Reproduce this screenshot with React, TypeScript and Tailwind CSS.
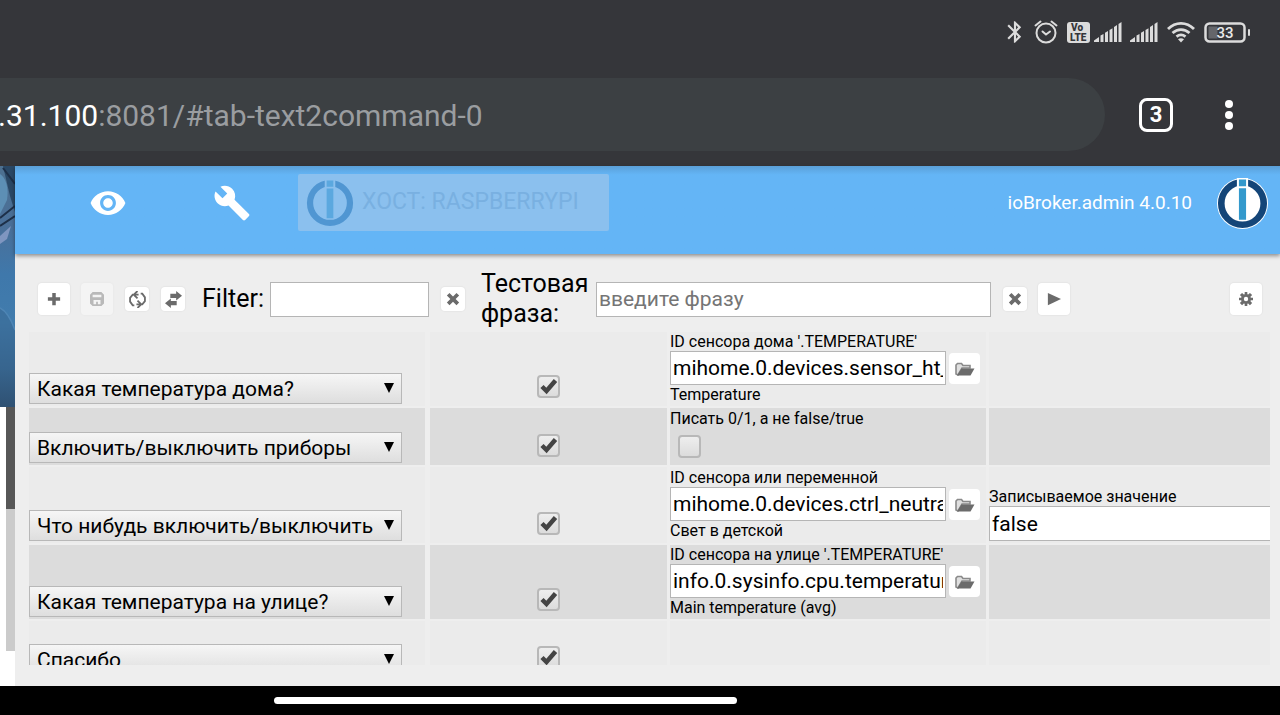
import type { ReactNode } from "react";
import { MdBluetooth, MdBuild, MdVisibility } from "react-icons/md";

type Rule = {
  command: string;
  label?: string;
  value?: string;
  hint?: string;
  flag?: string;
  param?: string;
};

const rules: Rule[] = [
  {
    command: "Какая температура дома?",
    label: "ID сенсора дома '.TEMPERATURE'",
    value: "mihome.0.devices.sensor_ht_temperature",
    hint: "Temperature",
  },
  {
    command: "Включить/выключить приборы",
    flag: "Писать 0/1, а не false/true",
  },
  {
    command: "Что нибудь включить/выключить",
    label: "ID сенсора или переменной",
    value: "mihome.0.devices.ctrl_neutral",
    hint: "Свет в детской",
    param: "false",
  },
  {
    command: "Какая температура на улице?",
    label: "ID сенсора на улице '.TEMPERATURE'",
    value: "info.0.sysinfo.cpu.temperature",
    hint: "Main temperature (avg)",
  },
  { command: "Спасибо" },
];

function Signal() {
  return (
    <svg width="28" height="20" viewBox="0 0 28 20" fill="#dcdcdc" aria-hidden="true">
      <path d="M0 20v-1.500L5 15v5zM6.500 13.500l3-1.600V20h-3zM11 10.800l3-1.700V20h-3zM15.500 8l3-1.800V20h-3zM20 5l3-1.900V20h-3zM24.500 2l3-2v20h-3z" />
    </svg>
  );
}

function StatusBar() {
  return (
    <div className="flex h-16 items-center justify-end pr-[29px]">
      <MdBluetooth className="mr-px size-[26px] text-[#dcdcdc]" />
      <svg className="ml-1" width="26" height="24" viewBox="0 0 26 24" fill="none" stroke="#dcdcdc" strokeWidth="2" strokeLinecap="round" aria-hidden="true">
        <circle cx="13" cy="13" r="9.500" />
        <path d="M9.500 11.500l3.500 3 4-3M2.500 5.500l5-4M23.500 5.500l-5-4" />
      </svg>
      <svg className="ml-2" width="23" height="21" viewBox="0 0 23 21" aria-hidden="true">
        <rect width="23" height="21" rx="3" fill="#dcdcdc" />
        <text x="4" y="9" fontSize="10" fontWeight="900" fontFamily="Roboto, sans-serif" fill="#35363a">Vo</text>
        <text x="3" y="19" fontSize="10" fontWeight="900" fontFamily="Roboto, sans-serif" fill="#35363a">LTE</text>
      </svg>
      <div className="ml-1 flex gap-2">
        <Signal />
        <Signal />
      </div>
      <svg className="ml-2" width="30" height="22" viewBox="0 0 30 22" fill="none" stroke="#dcdcdc" strokeWidth="2.800" aria-hidden="true">
        <path d="M2 8C9.500.5 20.500.5 28 8M6.500 12c5-4.600 12-4.600 17 0M10.500 15.700c2.800-2.300 6.200-2.300 9 0" />
        <path d="M15 21.500l-3-3.200c1.800-1.300 4.200-1.300 6 0z" fill="#dcdcdc" stroke="none" />
      </svg>
      <svg className="ml-2" width="47" height="21" viewBox="0 0 47 21" aria-hidden="true">
        <rect x="1.500" y="1.500" width="39" height="18" rx="4" fill="none" stroke="#dcdcdc" strokeWidth="2.500" />
        <rect x="4.500" y="4.500" width="9" height="12" fill="#65666a" />
        <rect x="44" y="7" width="2" height="7" rx="1" fill="#dcdcdc" />
        <text x="21" y="16" textAnchor="middle" fontSize="15" fontWeight="500" fontFamily="Roboto, sans-serif" fill="#e8e8e8">33</text>
      </svg>
    </div>
  );
}

function AddressBar() {
  return (
    <div className="mt-[14px] mb-[15px] flex items-center">
      <a
        href="#tab-text2command-0"
        className="flex h-[73px] flex-1 items-center overflow-hidden rounded-r-full bg-[#3c4043] pt-[2px] text-[30px] text-[#9a9da0]"
      >
        <span className="-ml-[2px] text-white">.31.100</span>:8081/#tab-text2command-0
      </a>
      <button aria-label="Tabs" className="ml-[34px] flex size-[34px] items-center justify-center rounded-lg border-[3px] border-white text-[22px] font-bold text-white">
        3
      </button>
      <button aria-label="Menu" className="mr-[41px] ml-[46px] flex w-5 flex-col items-center gap-[3px]">
        <span className="size-2 rounded-full bg-white" />
        <span className="size-2 rounded-full bg-white" />
        <span className="size-2 rounded-full bg-white" />
      </button>
    </div>
  );
}

function Logo({ muted, className }: { muted?: boolean; className: string }) {
  const ring = muted ? "#5096d2" : "#144578";
  const bar = muted ? "#5ba8df" : "#3399cc";
  const back = muted ? "#8bc0ee" : "#fff";
  return (
    <svg className={className} viewBox="0 0 50 50" aria-hidden="true">
      <circle cx="25" cy="25" r="25" fill={back} />
      <circle cx="25" cy="25" r="20.800" fill="none" stroke={ring} strokeWidth="6.500" />
      <path fill={back} d="M19.500 0h11v12h-11z" />
      <path fill={bar} d="M21.500 1.500h7v6.500h-7zM21.500 10h7v31h-7z" />
    </svg>
  );
}

function SideStrip() {
  return (
    <aside className="flex w-[15px] shrink-0 flex-col bg-white">
      <svg className="w-full" height="241" viewBox="0 0 15 241" preserveAspectRatio="none" aria-hidden="true">
        <defs>
          <linearGradient id="wave" x1="0" y1="0" x2="0" y2="1">
            <stop offset="0" stopColor="#4d7090" />
            <stop offset="0.25" stopColor="#4a6f98" />
            <stop offset="0.45" stopColor="#3f78ab" />
            <stop offset="0.65" stopColor="#417cad" />
            <stop offset="1" stopColor="#2f5173" />
          </linearGradient>
        </defs>
        <path fill="url(#wave)" d="M0 0h15v241H0z" />
        <path fill="#2a4866" d="M3 0h12v46L10 30z" />
        <path fill="#5d8fb5" d="M0 8c6 4 9 14 7 26l-7 14z" />
        <path fill="none" stroke="#1d2f48" strokeWidth="2" d="M0 52l15-12M3 2l12 16M0 60l15-10" />
        <path fill="#7f96c0" d="M0 70l11-10-4 13-7 5z" />
        <path fill="#386690" d="M0 142c6 3 11 11 15 22v40H0z" opacity="0.5" />
        <path fill="none" stroke="#4f86b5" strokeWidth="1.500" d="M0 142c6 3 11 11 15 22" />
      </svg>
      <div className="ml-[6px] h-[102px] bg-[#575757]" />
      <div className="ml-[6px] h-[142px] bg-[#cbcbcb]" />
    </aside>
  );
}

function Header() {
  return (
    <header className="relative flex h-[88px] items-start bg-[#64b5f6] bg-linear-to-b from-[#5a9fd8] to-[#64b5f6] to-10% pt-2 pr-[12px] pl-[74px] shadow-[0_2px_4px_rgba(0,0,0,0.4)]">
      <button aria-label="Visibility" className="mt-[10px]">
        <MdVisibility className="size-[38px] text-white" />
      </button>
      <button aria-label="Settings" className="mt-[10px] ml-[86px]">
        <MdBuild className="size-[38px] text-white" />
      </button>
      <button disabled className="ml-[47px] flex h-[57px] w-[311px] items-center gap-2 rounded-xs bg-[#8bc0ee] pl-2 text-[23px] text-[#79b0e1]">
        <Logo muted className="size-[48px]" />
        ХОСТ: RASPBERRYPI
      </button>
      <a href="#about" className="mt-[4px] ml-auto flex items-center gap-[25px] text-[19px] text-white">
        ioBroker.admin 4.0.10
        <Logo className="size-[51px]" />
      </a>
    </header>
  );
}

const glyphs: Record<string, ReactNode> = {
  plus: <path d="M6 1h4v5h5v4h-5v5H6v-5H1V6h5z" />,
  disk: <path fillRule="evenodd" d="M3 0h10l3 3v10l-3 3H3l-3-3V3zM3 3v3h10V3zM4 9v5h3v-3h2v3h3V9z" />,
  refresh: (
    <path
      d="M5 13.500H3.500L1 10V6.500L3.500 3.500H9M8 0L4.500 3.500 8 7M11 2.500h1.500L15 6v3.500l-2.500 3H7M8 9l3.500 3.500L8 16"
      fill="none"
      stroke="currentColor"
      strokeWidth="1.700"
    />
  ),
  swap: <path d="M10.500 0L16 4.500 10.500 9V6.500H5v-4h5.500zM5.500 7L0 11.500 5.500 16v-2.500H11v-4H5.500z" />,
  close: <path d="M1 4l3-3 4 4 4-4 3 3-4 4 4 4-3 3-4-4-4 4-3-3 4-4z" />,
  play: <path d="M1 1l15 7-15 7z" />,
  gear: (
    <path
      fillRule="evenodd"
      d="M6.500 0h3v2.500l1 .4 2-1.900 2.500 2.500-1.900 2 .4 1H16v3h-2.500l-.4 1 1.900 2-2.500 2.500-2-1.900-1 .4V16h-3v-2.500l-1-.4-2 1.900L1 12.500l1.900-2-.4-1H0v-3h2.500l.4-1-1.900-2L3.500 1l2 1.900 1-.4zM8 5.500a2.500 2.500 0 1 0 0 5 2.500 2.500 0 0 0 0-5z"
    />
  ),
};

function ToolButton({
  icon,
  label,
  small,
  large,
  disabled,
  className = "",
}: {
  icon: string;
  label: string;
  small?: boolean;
  large?: boolean;
  disabled?: boolean;
  className?: string;
}) {
  return (
    <button
      aria-label={label}
      disabled={disabled}
      className={`flex shrink-0 items-center justify-center rounded-sm bg-white text-[#6b6b6b] shadow-[0_0_1px_1px_#e6e6e6] disabled:opacity-40 ${
        small ? "size-6" : "size-8"
      } ${className}`}
    >
      <svg className={large ? "size-[17px]" : "size-[14px]"} viewBox="0 0 16 16" fill="currentColor" aria-hidden="true">
        {glyphs[icon]}
      </svg>
    </button>
  );
}

function Toolbar() {
  return (
    <div className="flex h-[76px] items-center pt-[14px] pr-[18px] pl-[23px] text-[25px] leading-[30px]">
      <ToolButton icon="plus" label="Add" />
      <ToolButton icon="disk" label="Save" disabled className="ml-[11px]" />
      <ToolButton icon="refresh" label="Refresh" small large className="ml-3" />
      <ToolButton icon="swap" label="Transfer" small large className="ml-3" />
      <label htmlFor="filter" className="ml-[17px]">
        Filter:
      </label>
      <input id="filter" className="ml-[6px] h-[35px] w-[159px] border border-[#b5b5b5] bg-white px-1 text-[21px]" />
      <ToolButton icon="close" label="Clear filter" small className="ml-3" />
      <label htmlFor="phrase" className="ml-4 w-[110px] shrink-0">
        Тестовая фраза:
      </label>
      <input
        id="phrase"
        placeholder="введите фразу"
        className="ml-[5px] h-[35px] w-[395px] min-w-0 border border-[#b5b5b5] bg-white px-[2px] text-[21px] placeholder:text-[#757575]"
      />
      <ToolButton icon="close" label="Clear phrase" small className="ml-3" />
      <ToolButton icon="play" label="Play" className="ml-[11px]" />
      <ToolButton icon="gear" label="Options" className="ml-auto" />
    </div>
  );
}

function Check({ checked, label, id }: { checked?: boolean; label?: string; id?: string }) {
  return (
    <span className="relative inline-block size-[23px] align-top">
      <input
        id={id}
        type="checkbox"
        defaultChecked={checked}
        aria-label={label}
        className="peer block size-[23px] appearance-none rounded-sm border-2 border-[#b8b8b8] bg-linear-to-b from-[#eee] to-[#dcdcdc]"
      />
      <svg className="pointer-events-none absolute inset-0 hidden peer-checked:block" viewBox="0 0 23 23" aria-hidden="true">
        <path d="M5 11.500L9.500 16 18.500 5.500" fill="none" stroke="#444" strokeWidth="4.500" />
      </svg>
    </span>
  );
}

function RuleRow({ rule, index }: { rule: Rule; index: number }) {
  const id = `rule-${index}`;
  return (
    <tr className={`odd:bg-[#ebebeb] even:bg-[#dcdcdc] ${rule.param ? "h-[76px]" : "h-[56px]"}`}>
      <td className="border-r-2 border-[#eee] pb-[2px] align-bottom">
        <div className="relative w-[373px]">
          <select
            aria-label="Команда"
            className="block h-[31px] w-full appearance-none border border-[#b8b8b8] bg-linear-to-b from-[#f6f6f6] to-[#dedede] pl-[7px] text-[21px] leading-6"
          >
            <option>{rule.command}</option>
          </select>
          <svg className="pointer-events-none absolute top-[10px] right-[8px]" width="10" height="10" viewBox="0 0 10 10" aria-hidden="true">
            <path d="M0 0h10L5 10z" />
          </svg>
        </div>
      </td>
      <td className="pb-[7px] text-center align-bottom">
        <Check checked label={rule.command} />
      </td>
      <td className="align-middle">
        {rule.label && (
          <>
            <label htmlFor={id} className="block text-[16px] leading-[19px]">
              {rule.label}
            </label>
            <div className="flex gap-[3px]">
              <input
                id={id}
                defaultValue={rule.value}
                className="h-[34px] w-[276px] border border-[#b5b5b5] bg-white px-[2px] text-[21px]"
              />
              <button aria-label="Select ID" className="mt-[2px] flex size-[31px] items-center justify-center rounded-sm bg-white">
                <svg width="20" height="14" viewBox="0 0 20 14" fill="none" aria-hidden="true">
                  <path d="M1 12V3l1.500-1.500h4L8 3.500h7V6H7l-4 7z" fill="#e0e0e0" stroke="#8a8a8a" strokeWidth="1.600" />
                  <path d="M2 13.500L6.500 6.500H19.500L15.500 13.500z" fill="#6b6b6b" />
                </svg>
              </button>
            </div>
            <div className="h-[21px] text-[16px] leading-[20px]">{rule.hint}</div>
          </>
        )}
        {rule.flag && (
          <>
            <label htmlFor={id} className="block h-[27px] text-[16px] leading-[21px]">
              {rule.flag}
            </label>
            <div className="h-[30px] pl-2">
              <Check id={id} />
            </div>
          </>
        )}
      </td>
      <td className="overflow-hidden pb-[2px] align-bottom">
        {rule.param && (
          <>
            <label htmlFor={`${id}-value`} className="block text-[16px] leading-[19px]">
              Записываемое значение
            </label>
            <input
              id={`${id}-value`}
              defaultValue={rule.param}
              className="block h-[35px] w-full border border-r-0 border-[#b5b5b5] bg-white px-[2px] text-[21px]"
            />
          </>
        )}
      </td>
    </tr>
  );
}

export default function App() {
  return (
    <div className="flex h-screen flex-col overflow-hidden bg-[#35363a] font-[Roboto,sans-serif] text-black">
      <StatusBar />
      <AddressBar />
      <div className="flex min-h-0 flex-1">
        <SideStrip />
        <main className="flex min-w-0 flex-1 flex-col bg-[#eee] pb-[21px]">
          <Header />
          <Toolbar />
          <div className="min-h-0 flex-1 overflow-hidden pr-[7px] pl-[11px]">
            <table className="w-full table-fixed border-separate border-spacing-x-[3px] border-spacing-y-[2px]">
              <colgroup>
                <col className="w-[398px]" />
                <col className="w-[237px]" />
                <col className="w-[316px]" />
                <col />
              </colgroup>
              <tbody>
                {rules.map((rule, i) => (
                  <RuleRow key={rule.command} rule={rule} index={i} />
                ))}
              </tbody>
            </table>
          </div>
        </main>
      </div>
      <footer className="flex h-[29px] shrink-0 justify-center bg-black pt-[11px]">
        <div className="mr-[270px] h-[7px] w-[463px] rounded-full bg-white" />
      </footer>
    </div>
  );
}
